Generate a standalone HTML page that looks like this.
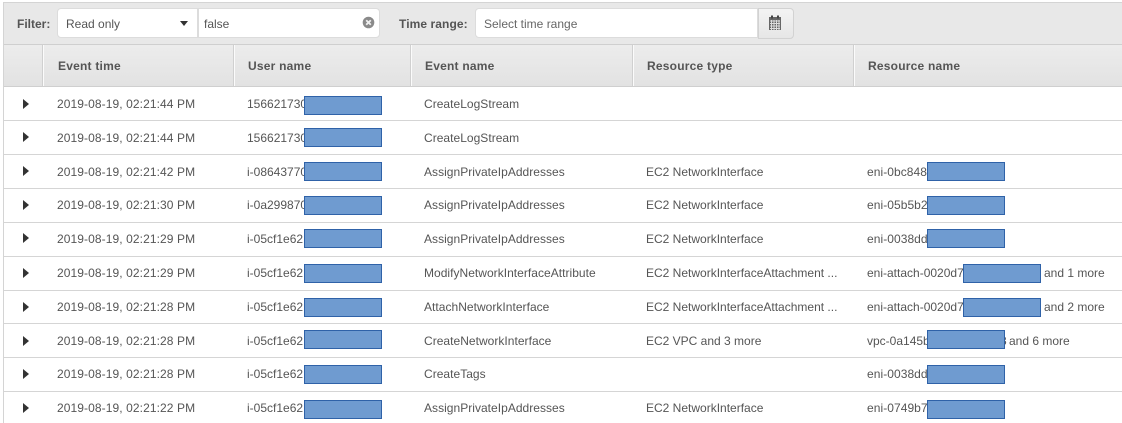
<!DOCTYPE html>
<html><head><meta charset="utf-8"><style>
html,body{margin:0;padding:0;background:#fff}
#p{position:relative;width:1122px;height:423px;overflow:hidden;background:#fff;font-family:"Liberation Sans",sans-serif;font-size:12px;color:#555;filter:blur(.35px)}
#p div{position:absolute;white-space:nowrap}
.t{line-height:16px;height:16px}
.h{font-weight:bold;color:#555;top:58px;letter-spacing:.22px}
.sep{left:4px;width:1118px;height:1px;background:#d5d5d5}
.v{top:45px;width:1px;height:41px;background:#fbfbfb;border-left:1px solid #d0d0d0}
.b{background:#6f9bd0;border:1px solid #2f62a8;box-sizing:border-box;height:19px}
.a{left:23px;width:0;height:0;border-left:6px solid #333;border-top:5px solid transparent;border-bottom:5px solid transparent}
.c1{left:57px;letter-spacing:.09px}.c2{left:247px}.c3{left:424px;letter-spacing:.03px}.c4{left:646px}.c5{left:867px}
.e{letter-spacing:.06px}
</style></head><body><div id="p">
<div style="left:3px;top:2px;width:1119px;height:42px;background:#e8e8e8;border-top:1px solid #d4d4d4"></div>
<div style="left:3px;top:2px;width:1px;height:421px;background:#d4d4d4"></div>
<div style="left:4px;top:44px;width:1118px;height:43px;background:linear-gradient(#ececec,#e2e2e2);border-top:1px solid #cfcfcf;border-bottom:1px solid #cfcfcf;box-sizing:border-box"></div>

<div class="t" style="left:17px;top:16px;font-weight:bold">Filter:</div>
<div style="left:57px;top:8px;width:141px;height:30px;background:#fff;border-radius:4px 0 0 4px;border:1px solid #dcdcdc;box-sizing:border-box"></div>
<div class="t" style="left:66px;top:16px">Read only</div>
<div style="left:180px;top:21px;width:0;height:0;border-top:5px solid #333;border-left:4.5px solid transparent;border-right:4.5px solid transparent"></div>
<div style="left:198px;top:8px;width:182px;height:30px;background:#fff;border-radius:0 4px 4px 0;border:1px solid #dcdcdc;box-sizing:border-box"></div>
<div class="t" style="left:204px;top:16px">false</div>
<svg style="position:absolute;left:362px;top:16px" width="13" height="13" viewBox="0 0 13 13"><circle cx="6.500" cy="6.500" r="5.800" fill="#8a8a8a"/><path d="M4.200 4.200l4.600 4.600M8.800 4.200l-4.600 4.600" stroke="#f0f0f0" stroke-width="1.800"/></svg>

<div class="t" style="left:399px;top:16px;font-weight:bold;letter-spacing:.08px">Time range:</div>
<div style="left:475px;top:8px;width:283px;height:30px;background:#fff;border-radius:4px 0 0 4px;border:1px solid #dcdcdc;box-sizing:border-box"></div>
<div class="t" style="left:484px;top:16px;color:#666">Select time range</div>
<div style="left:758px;top:8px;width:36px;height:31px;background:linear-gradient(#f3f3f3,#e6e6e6);border-radius:0 4px 4px 0;border:1px solid #d2d2d2;box-sizing:border-box"></div>
<svg style="position:absolute;left:768px;top:14px" width="14" height="17" viewBox="0 0 14 17"><rect x="1" y="3" width="12" height="13" fill="#666"/><rect x="3" y="1.500" width="2" height="3" fill="#444"/><rect x="9" y="1.500" width="2" height="3" fill="#444"/><path d="M2 7h10M2 9.500h10M2 12h10M2 14.500h10M3.500 6v10M6 6v10M8.500 6v10M11 6v10" stroke="#ddd" stroke-width="1"/></svg>

<div class="v" style="left:42px"></div><div class="v" style="left:233px"></div><div class="v" style="left:410px"></div><div class="v" style="left:632px"></div><div class="v" style="left:853px"></div>
<div class="t h" style="left:58px">Event time</div>
<div class="t h" style="left:248px">User name</div>
<div class="t h" style="left:425px">Event name</div>
<div class="t h" style="left:647px">Resource type</div>
<div class="t h" style="left:868px">Resource name</div>

<div class="sep" style="top:120px"></div><div class="sep" style="top:154px"></div><div class="sep" style="top:188px"></div><div class="sep" style="top:222px"></div><div class="sep" style="top:256px"></div><div class="sep" style="top:290px"></div><div class="sep" style="top:323px"></div><div class="sep" style="top:357px"></div><div class="sep" style="top:391px"></div>

<div class="a" style="top:99px"></div><div class="t c1" style="top:96px">2019-08-19, 02:21:44 PM</div><div class="t c2" style="top:96px">156621730</div><div class="b" style="left:304px;top:96px;width:78px"></div><div class="t c3" style="top:96px">CreateLogStream</div>

<div class="a" style="top:132px"></div><div class="t c1" style="top:130px">2019-08-19, 02:21:44 PM</div><div class="t c2" style="top:130px">156621730</div><div class="b" style="left:304px;top:128px;width:78px"></div><div class="t c3" style="top:130px">CreateLogStream</div>

<div class="a" style="top:166px"></div><div class="t c1" style="top:164px">2019-08-19, 02:21:42 PM</div><div class="t c2" style="top:164px">i-08643770</div><div class="b" style="left:304px;top:162px;width:78px"></div><div class="t c3" style="top:164px">AssignPrivateIpAddresses</div><div class="t c4" style="top:164px">EC2 NetworkInterface</div><div class="t c5 e" style="top:164px">eni-0bc848</div><div class="b" style="left:927px;top:162px;width:78px"></div>

<div class="a" style="top:200px"></div><div class="t c1" style="top:197px">2019-08-19, 02:21:30 PM</div><div class="t c2" style="top:197px">i-0a299870</div><div class="b" style="left:304px;top:196px;width:78px"></div><div class="t c3" style="top:197px">AssignPrivateIpAddresses</div><div class="t c4" style="top:197px">EC2 NetworkInterface</div><div class="t c5 e" style="top:197px">eni-05b5b2</div><div class="b" style="left:927px;top:196px;width:78px"></div>

<div class="a" style="top:233px"></div><div class="t c1" style="top:231px">2019-08-19, 02:21:29 PM</div><div class="t c2" style="top:231px">i-05cf1e62</div><div class="b" style="left:304px;top:229px;width:78px"></div><div class="t c3" style="top:231px">AssignPrivateIpAddresses</div><div class="t c4" style="top:231px">EC2 NetworkInterface</div><div class="t c5 e" style="top:231px">eni-0038dd</div><div class="b" style="left:927px;top:229px;width:78px"></div>

<div class="a" style="top:268px"></div><div class="t c1" style="top:265px">2019-08-19, 02:21:29 PM</div><div class="t c2" style="top:265px">i-05cf1e62</div><div class="b" style="left:304px;top:264px;width:78px"></div><div class="t c3" style="top:265px">ModifyNetworkInterfaceAttribute</div><div class="t c4" style="top:265px">EC2 NetworkInterfaceAttachment ...</div><div class="t c5" style="top:265px">eni-attach-0020d7</div><div class="b" style="left:963px;top:264px;width:78px"></div><div class="t" style="left:1044px;top:265px">and 1 more</div>

<div class="a" style="top:302px"></div><div class="t c1" style="top:299px">2019-08-19, 02:21:28 PM</div><div class="t c2" style="top:299px">i-05cf1e62</div><div class="b" style="left:304px;top:298px;width:78px"></div><div class="t c3" style="top:299px">AttachNetworkInterface</div><div class="t c4" style="top:299px">EC2 NetworkInterfaceAttachment ...</div><div class="t c5" style="top:299px">eni-attach-0020d7</div><div class="b" style="left:963px;top:298px;width:78px"></div><div class="t" style="left:1044px;top:299px">and 2 more</div>

<div class="a" style="top:336px"></div><div class="t c1" style="top:333px">2019-08-19, 02:21:28 PM</div><div class="t c2" style="top:333px">i-05cf1e62</div><div class="b" style="left:304px;top:330px;width:78px"></div><div class="t c3" style="top:333px">CreateNetworkInterface</div><div class="t c4" style="top:333px">EC2 VPC and 3 more</div><div class="t c5" style="top:333px">vpc-0a145b</div><div class="b" style="left:927px;top:330px;width:78px"></div><div class="t" style="left:1005px;top:333px;width:2px;overflow:hidden;text-indent:-5px">3</div><div class="t" style="left:1009px;top:333px">and 6 more</div>

<div class="a" style="top:369px"></div><div class="t c1" style="top:366px">2019-08-19, 02:21:28 PM</div><div class="t c2" style="top:366px">i-05cf1e62</div><div class="b" style="left:304px;top:365px;width:78px"></div><div class="t c3" style="top:366px">CreateTags</div><div class="t c5 e" style="top:366px">eni-0038dd</div><div class="b" style="left:927px;top:365px;width:78px"></div>

<div class="a" style="top:403px"></div><div class="t c1" style="top:400px">2019-08-19, 02:21:22 PM</div><div class="t c2" style="top:400px">i-05cf1e62</div><div class="b" style="left:304px;top:400px;width:78px"></div><div class="t c3" style="top:400px">AssignPrivateIpAddresses</div><div class="t c4" style="top:400px">EC2 NetworkInterface</div><div class="t c5 e" style="top:400px">eni-0749b7</div><div class="b" style="left:927px;top:400px;width:78px"></div>
</div></body></html>
